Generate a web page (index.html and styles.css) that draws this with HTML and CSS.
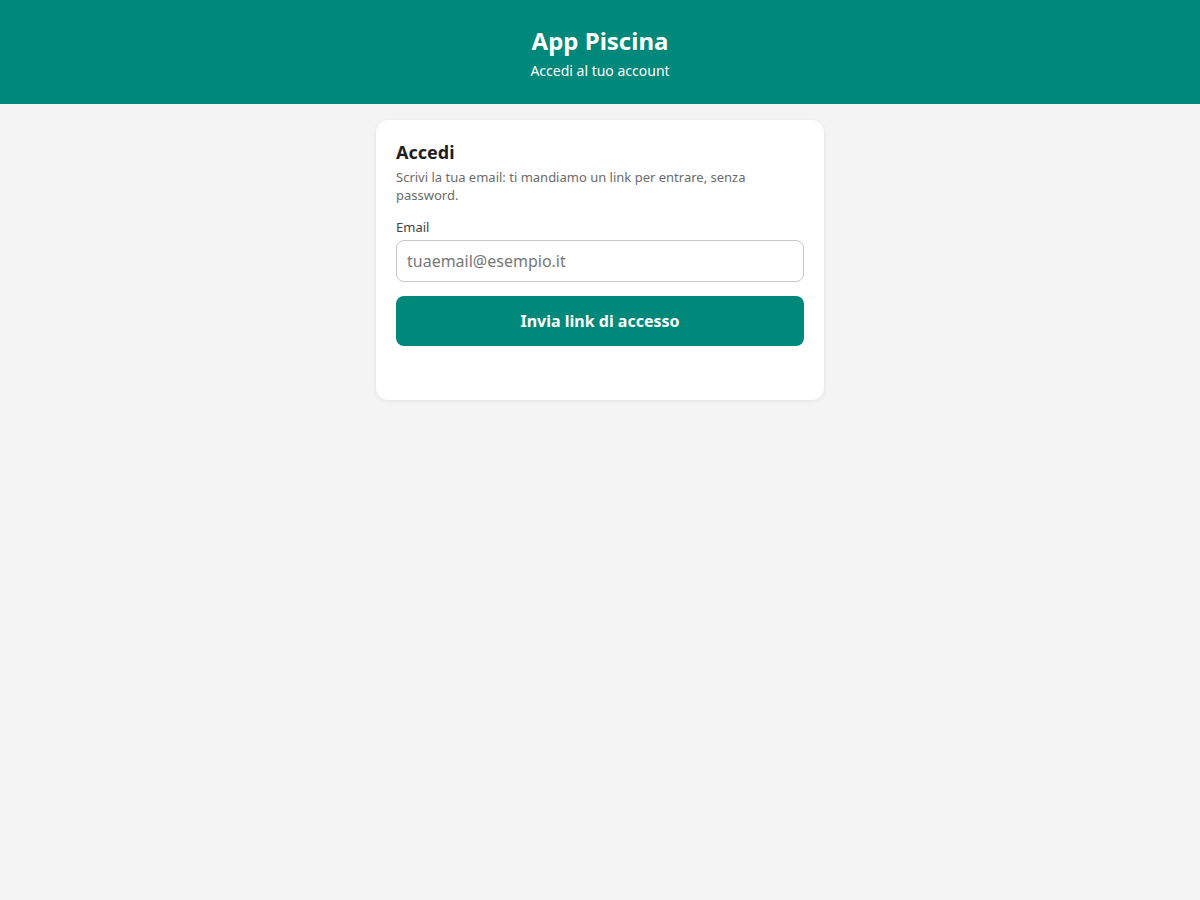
FILE: index.html
```html
<!DOCTYPE html>
<html lang="it">
<head>
<meta charset="utf-8">
<title>App Piscina</title>
<link rel="stylesheet" href="styles.css">
</head>
<body>
<header class="topbar">
  <h1 class="topbar-title">App Piscina</h1>
  <p class="topbar-sub">Accedi al tuo account</p>
</header>
<main class="main">
  <section class="card">
    <h2 class="card-title">Accedi</h2>
    <p class="card-text">Scrivi la tua email: ti mandiamo un link per entrare, senza password.</p>
    <label class="field-label" for="email">Email</label>
    <input class="field-input" id="email" type="email" placeholder="tuaemail@esempio.it">
    <button class="btn-primary" type="button">Invia link di accesso</button>
    <div class="message"></div>
  </section>
</main>
</body>
</html>
```
FILE: styles.css
```css
* { box-sizing: border-box; }
html, body { margin: 0; padding: 0; }
body {
  background: #f4f4f4;
  font-family: "Noto Sans", "Open Sans", sans-serif;
  color: #222;
  min-height: 900px;
}
.topbar {
  background: #00897b;
  color: #fff;
  text-align: center;
  padding: 24px 16px;
}
.topbar-title {
  margin: 0;
  font-size: 24px;
  font-weight: 700;
  line-height: 33px;
}
.topbar-sub {
  margin: 4px 0 0;
  font-size: 14px;
  line-height: 19px;
}
.main {
  padding: 16px;
  display: flex;
  justify-content: center;
}
.card {
  width: 448px;
  background: #fff;
  border-radius: 12px;
  box-shadow: 0 1px 4px rgba(0,0,0,0.08);
  padding: 20px 20px 54px;
  display: flex;
  flex-direction: column;
}
.card-title {
  margin: 0;
  font-size: 18px;
  font-weight: 700;
  line-height: 24px;
  color: #1f1f1f;
}
.card-text {
  margin: 4px 0 0;
  font-size: 13px;
  line-height: 18px;
  color: #6b6b6b;
}
.field-label {
  margin-top: 14px;
  font-size: 13px;
  line-height: 18px;
  color: #444;
}
.field-input {
  margin-top: 4px;
  height: 42px;
  border: 1px solid #c8c8c8;
  border-radius: 8px;
  padding: 0 10px;
  font-family: inherit;
  font-size: 16px;
  color: #222;
  background: #fff;
}
.field-input::placeholder { color: #777; }
.btn-primary {
  margin-top: 14px;
  height: 50px;
  border: none;
  border-radius: 8px;
  background: #00897b;
  color: #fff;
  font-family: inherit;
  font-size: 16px;
  font-weight: 700;
}
.message { min-height: 0; }
```
